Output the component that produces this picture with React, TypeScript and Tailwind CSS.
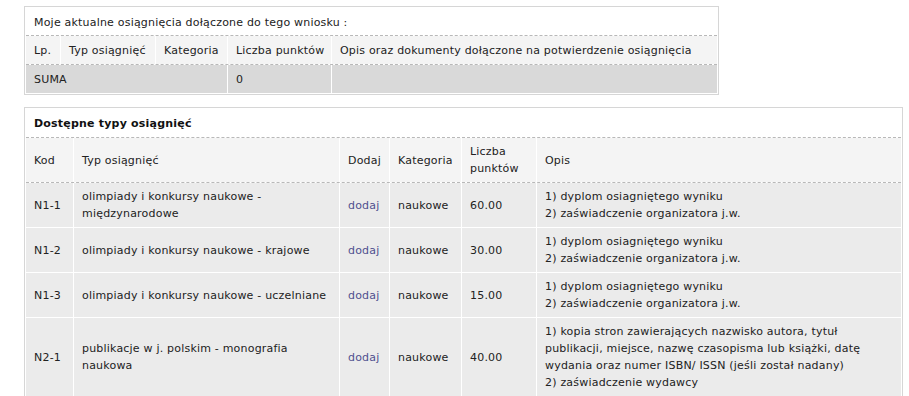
// Osiągnięcia — wniosek
const achievementTypes = [
  {
    code: "N1-1",
    name: ["olimpiady i konkursy naukowe -", "międzynarodowe"],
    points: "60.00",
    docs: ["1) dyplom osiagniętego wyniku", "2) zaświadczenie organizatora j.w."],
  },
  {
    code: "N1-2",
    name: ["olimpiady i konkursy naukowe - krajowe"],
    points: "30.00",
    docs: ["1) dyplom osiagniętego wyniku", "2) zaświadczenie organizatora j.w."],
  },
  {
    code: "N1-3",
    name: ["olimpiady i konkursy naukowe - uczelniane"],
    points: "15.00",
    docs: ["1) dyplom osiagniętego wyniku", "2) zaświadczenie organizatora j.w."],
  },
  {
    code: "N2-1",
    name: ["publikacje w j. polskim - monografia", "naukowa"],
    points: "40.00",
    docs: [
      "1) kopia stron zawierających nazwisko autora, tytuł",
      "publikacji, miejsce, nazwę czasopisma lub książki, datę",
      "wydania oraz numer ISBN/ ISSN (jeśli został nadany)",
      "2) zaświadczenie wydawcy",
    ],
  },
];

function Lines({ lines }: { lines: string[] }) {
  return (
    <div>
      {lines.map((l) => (
        <div key={l}>{l}</div>
      ))}
    </div>
  );
}

const cell = "flex items-center whitespace-nowrap px-[8px] py-[5px]";

export default function App() {
  return (
    <div className="min-h-screen bg-white pl-[24px] pt-[6px] font-['DejaVu_Sans',sans-serif] text-[11px] leading-[17px] tracking-[0.2px] text-[#222]">
      {/* moje osiągnięcia */}
      <div className="w-[695px] border border-[#d6d6d6] bg-white p-px">
        <div className="flex h-[28px] items-center border-b border-dashed border-[#b8b8b8] px-[8px] pt-px">
          Moje aktualne osiągnięcia dołączone do tego wniosku :
        </div>
        <div className="grid h-[29px] grid-cols-[34px_94px_71px_103px_1fr] gap-x-px border-b border-dashed border-[#b8b8b8] bg-white">
          <div className={`${cell} bg-[#f4f4f4]`}>Lp.</div>
          <div className={`${cell} bg-[#f4f4f4]`}>Typ osiągnięć</div>
          <div className={`${cell} bg-[#f4f4f4]`}>Kategoria</div>
          <div className={`${cell} bg-[#f4f4f4]`}>Liczba punktów</div>
          <div className={`${cell} bg-[#f4f4f4]`}>Opis oraz dokumenty dołączone na potwierdzenie osiągnięcia</div>
        </div>
        <div className="grid h-[28px] grid-cols-[201px_103px_1fr] gap-x-px bg-white">
          <div className={`${cell} bg-[#d9d9d9]`}>SUMA</div>
          <div className={`${cell} bg-[#d9d9d9]`}>0</div>
          <div className="bg-[#d9d9d9]" />
        </div>
      </div>

      {/* dostępne typy */}
      <div className="mt-[12px] w-[879px] border border-[#d6d6d6] bg-white p-px">
        <div className="flex h-[29px] items-center border-b border-dashed border-[#b8b8b8] px-[8px] pt-px font-bold text-[#111]">
          Dostępne typy osiągnięć
        </div>
        <div className="grid grid-cols-[47px_265px_49px_71px_74px_1fr] gap-x-px border-b border-dashed border-[#b8b8b8] bg-white">
          <div className={`${cell} h-[44px] bg-[#f4f4f4]`}>Kod</div>
          <div className={`${cell} bg-[#f4f4f4]`}>Typ osiągnięć</div>
          <div className={`${cell} bg-[#f4f4f4]`}>Dodaj</div>
          <div className={`${cell} bg-[#f4f4f4]`}>Kategoria</div>
          <div className={`${cell} bg-[#f4f4f4]`}>
            <Lines lines={["Liczba", "punktów"]} />
          </div>
          <div className={`${cell} bg-[#f4f4f4]`}>Opis</div>
        </div>
        <div className="grid grid-cols-[47px_265px_49px_71px_74px_1fr] gap-px bg-white">
          {achievementTypes.map((t) => (
            <div key={t.code} className="contents">
              <div className={`${cell} min-h-[44px] bg-[#ebebeb]`}>{t.code}</div>
              <div className={`${cell} bg-[#ebebeb]`}>
                <Lines lines={t.name} />
              </div>
              <div className={`${cell} bg-[#ebebeb]`}>
                <a href="#" className="text-[#4f4f8f]">dodaj</a>
              </div>
              <div className={`${cell} bg-[#ebebeb]`}>naukowe</div>
              <div className={`${cell} bg-[#ebebeb]`}>{t.points}</div>
              <div className={`${cell} bg-[#ebebeb]`}>
                <Lines lines={t.docs} />
              </div>
            </div>
          ))}
        </div>
      </div>
    </div>
  );
}
